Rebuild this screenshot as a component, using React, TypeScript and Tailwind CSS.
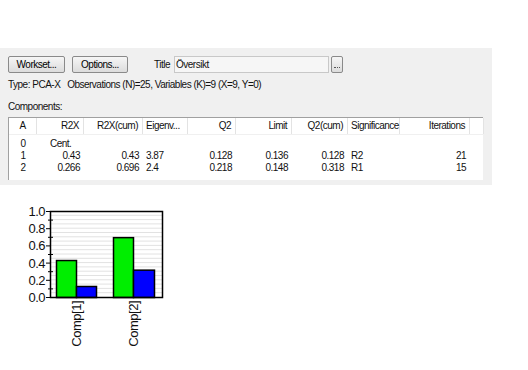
import React from "react";

const cols = [
  { label: "A", w: 28, align: "center" },
  { label: "R2X", w: 47, align: "right" },
  { label: "R2X(cum)", w: 59, align: "right" },
  { label: "Eigenv...", w: 45, align: "left" },
  { label: "Q2", w: 48, align: "right" },
  { label: "Limit", w: 56, align: "right" },
  { label: "Q2(cum)", w: 56, align: "right" },
  { label: "Significance", w: 52, align: "left" },
  { label: "Iterations", w: 70, align: "right" },
  { label: "", w: 14, align: "left" },
];

const rows = [
  ["0", "Cent.", "", "", "", "", "", "", "", ""],
  ["1", "0.43", "0.43", "3.87", "0.128", "0.136", "0.128", "R2", "21", ""],
  ["2", "0.266", "0.696", "2.4", "0.218", "0.148", "0.318", "R1", "15", ""],
];

function cellCls(align: string) {
  if (align === "center") return "text-center";
  if (align === "right") return "text-right pr-[4px]";
  return "text-left pl-[3px]";
}

function WinButton({ children, w }: { children: React.ReactNode; w: string }) {
  return (
    <button
      className={`${w} h-[17px] border border-[#8a8a8a] rounded-[2px] bg-gradient-to-b from-[#f6f6f6] to-[#dcdcdc] text-[10px] leading-[15px] text-black`}
    >
      {children}
    </button>
  );
}

function Chart() {
  const bottom = 97;
  const scale = 86;
  const grid = [];
  for (let k = 1; k < 20; k++) grid.push(bottom - k * scale * 0.05);
  const ticks = [0, 0.2, 0.4, 0.6, 0.8, 1.0];
  const minor = [0.1, 0.3, 0.5, 0.7, 0.9];
  const bars = [
    { x: 36, w: 20, v: 0.43, c: "#00ee00" },
    { x: 56, w: 20, v: 0.128, c: "#0000ff" },
    { x: 93, w: 20, v: 0.696, c: "#00ee00" },
    { x: 113, w: 21, v: 0.318, c: "#0000ff" },
  ];
  return (
    <svg width="180" height="150" className="ml-[20px] mt-[15px] block">
      {grid.map((y, i) => (
        <line key={i} x1={30} x2={143} y1={y} y2={y} stroke="#e2e2e2" strokeWidth={1} />
      ))}
      {bars.map((b, i) => (
        <rect
          key={i}
          x={b.x + 0.5}
          y={bottom - b.v * scale + 0.5}
          width={b.w}
          height={b.v * scale}
          fill={b.c}
          stroke="#000"
          strokeWidth={1.5}
        />
      ))}
      <rect x={30.5} y={11.5} width={112} height={86} fill="none" stroke="#000" strokeWidth={1.5} />
      {ticks.map((t) => (
        <g key={t}>
          <line x1={26} x2={30} y1={bottom - t * scale + 0.5} y2={bottom - t * scale + 0.5} stroke="#000" />
          <text
            x={25}
            y={bottom - t * scale + 5}
            textAnchor="end"
            fontSize="13"
            fontFamily="'Liberation Sans', Arial, sans-serif"
            fill="#111"
          >
            {t.toFixed(1)}
          </text>
        </g>
      ))}
      {minor.map((t) => (
        <line key={t} x1={28} x2={33} y1={bottom - t * scale + 0.5} y2={bottom - t * scale + 0.5} stroke="#000" />
      ))}
      {[
        { x: 61, label: "Comp[1]" },
        { x: 118, label: "Comp[2]" },
      ].map((l) => (
        <text
          key={l.label}
          transform={`translate(${l.x},101) rotate(-90)`}
          textAnchor="end"
          fontSize="13"
          fontFamily="'Liberation Sans', Arial, sans-serif"
          fill="#111"
        >
          {l.label}
        </text>
      ))}
    </svg>
  );
}

export default function App() {
  return (
    <div className="w-[528px] h-[370px] bg-white overflow-hidden font-['Liberation_Sans',Arial,sans-serif] text-[10px] tracking-[-0.5px] text-[#111]">
      {/* Panel */}
      <div className="mt-[48px] w-[492px] h-[137px] bg-[#f0f0f0] pl-[8px] pt-[8px] flex flex-col">
        <div className="flex items-center h-[17px]">
          <WinButton w="w-[57px]">Workset...</WinButton>
          <div className="w-[7px]" />
          <WinButton w="w-[56px]">Options...</WinButton>
          <span className="ml-[26px] leading-[13px]">Title</span>
          <div className="ml-[4px] w-[155px] h-[17px] border border-[#c8c8c8] bg-[#f6f6f6] pl-[1px] leading-[15px]">
            Översikt
          </div>
          <button className="ml-[2px] w-[12px] h-[17px] border border-[#8a8a8a] rounded-[2px] bg-gradient-to-b from-[#f6f6f6] to-[#dcdcdc] flex items-end justify-center pb-[3px]">
            <span className="block w-[6px] h-[2px] border-t border-dotted border-[#555]" />
          </button>
        </div>
        <div className="mt-[5px] leading-[13px] whitespace-pre">
          {"Type: PCA-X   Observations (N)=25, Variables (K)=9 (X=9, Y=0)"}
        </div>
        <div className="mt-[9px] leading-[13px]">Components:</div>

        {/* Table */}
        <div className="mt-[4px] w-[475px] h-[63px] bg-white border-l border-t border-[#a0a0a0]">
          <div className="flex h-[17px] leading-[16px] border-b border-[#f0f0f0]">
            {cols.map((c, i) => (
              <div
                key={i}
                style={{ width: c.w }}
                className={`shrink-0 border-r border-[#e3e3e3] whitespace-nowrap ${cellCls(c.align)}`}
              >
                {c.label}
              </div>
            ))}
          </div>
          <div className="pt-[3px]">
            {rows.map((r, ri) => (
              <div key={ri} className="flex h-[12px] leading-[12px]">
                {r.map((v, ci) => (
                  <div
                    key={ci}
                    style={{ width: cols[ci].w }}
                    className={`shrink-0 whitespace-nowrap ${
                      ri === 0 && ci === 1 ? "text-left pl-[13px]" : cellCls(cols[ci].align)
                    }`}
                  >
                    {v}
                  </div>
                ))}
              </div>
            ))}
          </div>
        </div>
      </div>

      <Chart />
    </div>
  );
}
